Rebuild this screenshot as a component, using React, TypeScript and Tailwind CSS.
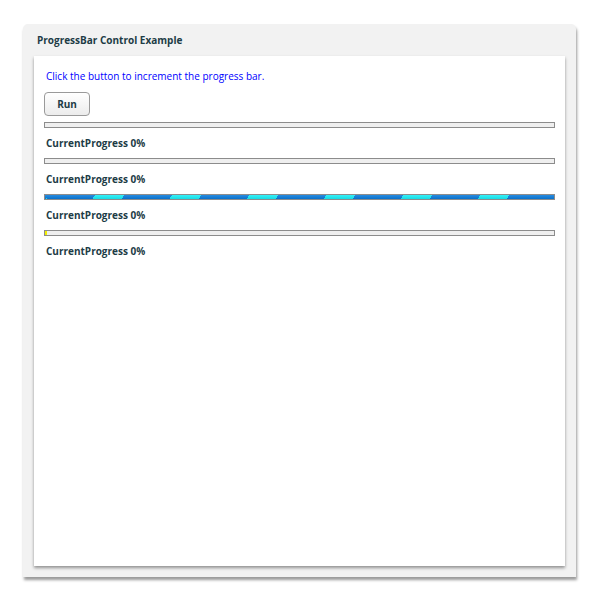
import React from "react";

type BarKind = "plain" | "stripes" | "yellow";

function Bar({ kind }: { kind: BarKind }) {
  if (kind === "stripes") {
    return (
      <div className="h-[6px] border border-[#8c8c8c] bg-[image:linear-gradient(rgba(255,255,255,0.12),rgba(0,0,0,0.08)),repeating-linear-gradient(120deg,#0a7bdc_0px,#0a7bdc_41.5px,#19eef7_41.5px,#19eef7_66.7px)] bg-[position:0_0,2px_0]" />
    );
  }
  return (
    <div className="h-[6px] border border-[#8c8c8c] bg-[#efefef] flex">
      {kind === "yellow" && <div className="w-[2px] h-full bg-[#f2ee00]" />}
    </div>
  );
}

export default function App() {
  const bars: BarKind[] = ["plain", "plain", "stripes", "yellow"];

  return (
    <div
      className="w-[600px] h-[600px] bg-white pt-[24px] pl-[23px]"
      style={{ fontFamily: '"Open Sans", "Noto Sans", sans-serif' }}
    >
      <div className="w-[553px] h-[553px] bg-[#f2f2f2] rounded-t-[5px] shadow-[1px_3px_3px_rgba(0,0,0,0.4)] flex flex-col px-[11px] pb-[11px]">
        <div className="h-[32px] flex items-center pl-[3px] text-[10px] font-bold text-[#1d3c46]">
          ProgressBar Control Example
        </div>
        <div className="flex-1 bg-white shadow-[0_2px_3px_rgba(0,0,0,0.4)] px-[10px] pt-[12px]">
          <p className="text-[10px] text-[#0000ff] leading-[16px] pl-[2px]">
            Click the button to increment the progress bar.
          </p>
          <button className="mt-[8px] w-[46px] h-[24px] rounded-[4px] border border-[#9a9a9a] bg-[linear-gradient(#ffffff,#ececec)] text-[10px] font-bold text-[#1d3c46]">
            Run
          </button>
          <div className="mt-[6px] flex flex-col">
            {bars.map((b, i) => (
              <div key={i}>
                <Bar kind={b} />
                <div className="h-[30px] flex items-center pl-[2px] text-[10px] font-bold text-[#1d3c46]">
                  CurrentProgress 0%
                </div>
              </div>
            ))}
          </div>
        </div>
      </div>
    </div>
  );
}
